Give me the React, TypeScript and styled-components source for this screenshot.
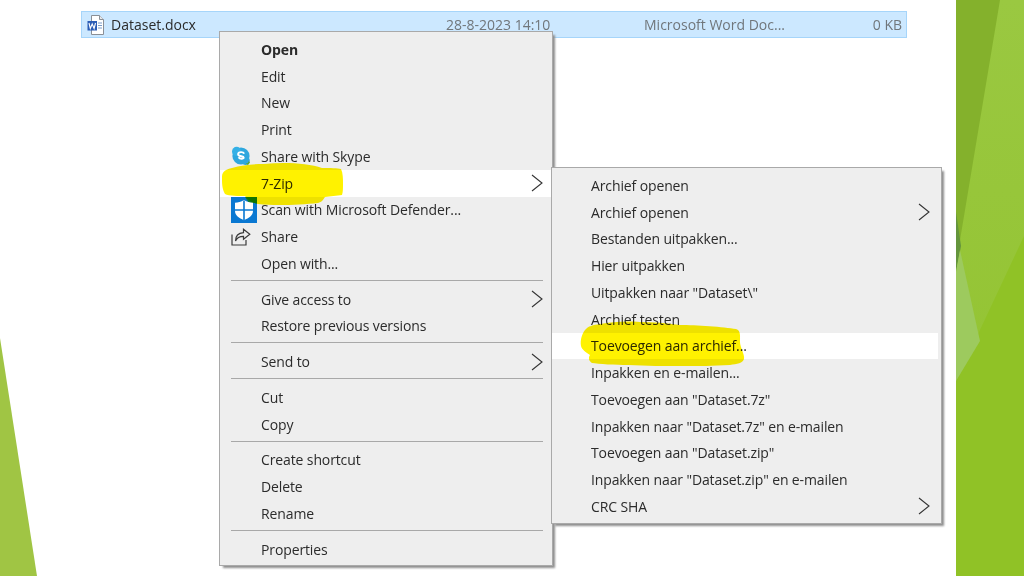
import React from "react";
import styled, { createGlobalStyle } from "styled-components";

const GlobalStyle = createGlobalStyle`
	html, body {
		margin: 0;
		padding: 0;
		background: #fff;
	}
	body {
		font-family: "Open Sans", "Noto Sans", sans-serif;
	}
`;

type Entry =
	| { kind: "sep" }
	| { kind: "item"; label: string; bold?: boolean; sub?: boolean; active?: boolean; icon?: React.ReactNode };

const SkypeIcon = () => (
	<svg width="20" height="20" viewBox="0 0 20 20">
		<circle cx="10" cy="10" r="8.6" fill="#2ea7de" />
		<circle cx="5.6" cy="5.4" r="4.6" fill="#35b0e6" />
		<circle cx="14.6" cy="14.8" r="4.2" fill="#2ea7de" />
		<path d="M14.8 17.6a3 3 0 0 0 3-2.600l1.200 1.400-2 2.600z" fill="#58a53a" />
		<path
			d="M13.200 7.600c-.5-1-1.700-1.500-3.100-1.500-1.700 0-3 .8-3 2.100 0 2.700 5.600 1.500 5.600 3.400 0 .7-.8 1.100-2.200 1.100-1.300 0-2.300-.5-3-1.500"
			fill="none"
			stroke="#fff"
			strokeWidth="1.900"
		/>
	</svg>
);

const DefenderIcon = () => (
	<svg width="26" height="26" viewBox="0 0 26 26">
		<rect width="26" height="26" fill="#0a78d2" />
		<path d="M14 0h12v6H18z" fill="#117a2e" />
		<path d="M13 3c3 2 6 2.600 9 2.800v8c0 4.600-4 7.400-9 9.400-5-2-9-4.800-9-9.400v-8c3-.2 6-.8 9-2.800z" fill="#fff" />
		<path d="M12.200 3.500h1.600v20h-1.600zM4 12.200h18v1.600H4z" fill="#0a78d2" />
	</svg>
);

const ShareIcon = () => (
	<svg width="20" height="18" viewBox="0 0 20 18" fill="none" stroke="#3a3a3a" strokeWidth="1.200">
		<path d="M1 6.500v10.500h14v-5" />
		<path d="M12.500 1.200l6.300 5-6.300 5V8.300c-4 0-6.600 1.300-8 4.700 0-5 3-8 8-8.400z" />
	</svg>
);

const WordIcon = () => (
	<svg width="18" height="20" viewBox="0 0 18 20">
		<path d="M4.500 .5h8l4 4v15h-12z" fill="#fff" stroke="#8a8f96" />
		<path d="M12.500 .5v4h4" fill="#e8eaec" stroke="#8a8f96" />
		<path d="M11 8h4M11 10.500h4M11 13h4" stroke="#7b9cc8" strokeWidth="1" />
		<rect x=".5" y="6" width="9.500" height="9.500" fill="#2b5cb5" />
		<path d="M2 8l1.300 5.500L5.200 9l1.900 4.500L8.500 8" fill="none" stroke="#fff" strokeWidth="1.100" />
	</svg>
);

const SubArrow = () => (
	<svg width="12" height="18" viewBox="0 0 12 18" fill="none" stroke="#333" strokeWidth="1.100">
		<path d="M1 1l10 8-10 8" />
	</svg>
);

const mainEntries: Entry[] = [
	{ kind: "item", label: "Open", bold: true },
	{ kind: "item", label: "Edit" },
	{ kind: "item", label: "New" },
	{ kind: "item", label: "Print" },
	{ kind: "item", label: "Share with Skype", icon: <SkypeIcon /> },
	{ kind: "item", label: "7-Zip", sub: true, active: true },
	{ kind: "item", label: "Scan with Microsoft Defender...", icon: <DefenderIcon /> },
	{ kind: "item", label: "Share", icon: <ShareIcon /> },
	{ kind: "item", label: "Open with..." },
	{ kind: "sep" },
	{ kind: "item", label: "Give access to", sub: true },
	{ kind: "item", label: "Restore previous versions" },
	{ kind: "sep" },
	{ kind: "item", label: "Send to", sub: true },
	{ kind: "sep" },
	{ kind: "item", label: "Cut" },
	{ kind: "item", label: "Copy" },
	{ kind: "sep" },
	{ kind: "item", label: "Create shortcut" },
	{ kind: "item", label: "Delete" },
	{ kind: "item", label: "Rename" },
	{ kind: "sep" },
	{ kind: "item", label: "Properties" },
];

const zipEntries: Entry[] = [
	{ kind: "item", label: "Archief openen" },
	{ kind: "item", label: "Archief openen", sub: true },
	{ kind: "item", label: "Bestanden uitpakken..." },
	{ kind: "item", label: "Hier uitpakken" },
	{ kind: "item", label: 'Uitpakken naar "Dataset\\"' },
	{ kind: "item", label: "Archief testen" },
	{ kind: "item", label: "Toevoegen aan archief...", active: true },
	{ kind: "item", label: "Inpakken en e-mailen..." },
	{ kind: "item", label: 'Toevoegen aan "Dataset.7z"' },
	{ kind: "item", label: 'Inpakken naar "Dataset.7z" en e-mailen' },
	{ kind: "item", label: 'Toevoegen aan "Dataset.zip"' },
	{ kind: "item", label: 'Inpakken naar "Dataset.zip" en e-mailen' },
	{ kind: "item", label: "CRC SHA", sub: true },
];

function MenuEntries({ entries }: { entries: Entry[] }) {
	return (
		<>
			{entries.map((entry, i) =>
				entry.kind === "sep" ? (
					<Separator key={i} />
				) : (
					<Row key={i} $active={entry.active}>
						{entry.icon && <IconSlot>{entry.icon}</IconSlot>}
						<RowLabel $bold={entry.bold}>{entry.label}</RowLabel>
						{entry.sub && (
							<Arrow>
								<SubArrow />
							</Arrow>
						)}
					</Row>
				)
			)}
		</>
	);
}

export default function App() {
	return (
		<Page>
			<GlobalStyle />
			<Slide>
				<FileRow>
					<FileName>
						<WordIcon />
						Dataset.docx
					</FileName>
					<FileMeta>28-8-2023 14:10</FileMeta>
					<FileMeta>Microsoft Word Doc...</FileMeta>
					<FileSize>0 KB</FileSize>
				</FileRow>
				<MainMenu>
					<MenuEntries entries={mainEntries} />
				</MainMenu>
				<ZipMenu>
					<MenuEntries entries={zipEntries} />
				</ZipMenu>
				<Marker viewBox="0 0 1024 576">
					<path
						d="M232 168c10-3 20-4 32-4 20-2 44-1 58 4 8 0 16 0 19 1 2 4 2 10 2 15 0 4 0 8-1 11-5 1-12 1-17 2-2 3-3 5-7 6-18 2-44 3-60 1-6-1-10-4-13-8-6 0-16 0-20-2-3-5-3-11-3-16 0-5 1-8 10-10z"
						fill="#fff200"
					/>
					<path
						d="M585 330c3-4 8-5 15-6 12-2 24-3 40-2 14 0 26 1 40 3 16 0 44 2 56 4 5 1 4 8 4 13 0 5 5 13 4 17-1 4-7 5-14 6-16 1-32 1-50 1-14 0-34 0-52-1-12 0-30-1-36-2-3-2-4-5-2-8-4-3-8-5-9-9-1-6 1-12 4-16z"
						fill="#fff200"
					/>
				</Marker>
				<LeftShard viewBox="0 0 37 238" preserveAspectRatio="none">
					<path d="M0 0L37 238H0z" fill="#a0c544" />
				</LeftShard>
			</Slide>
			<Side>
				<SideArt viewBox="0 0 68 576" preserveAspectRatio="none">
					<defs>
						<linearGradient id="upperBand" x1="0" y1="0" x2="0" y2="1">
							<stop offset="0" stopColor="#9ac841" />
							<stop offset="1" stopColor="#94c433" />
						</linearGradient>
					</defs>
					<rect width="68" height="576" fill="#90c226" />
					<path d="M0 0h68v236L0 381z" fill="url(#upperBand)" />
					<path d="M0 0h44L4 240 0 270z" fill="#84b12c" />
					<path d="M0 212l5 34-5 26z" fill="#64953c" />
					<path d="M4 250L24 341 0 381V272z" fill="#9dca5e" />
				</SideArt>
			</Side>
		</Page>
	);
}

const Page = styled.div`
	display: flex;
	width: 1024px;
	height: 576px;
	overflow: hidden;
	background: #fff;
`;

const Slide = styled.div`
	position: relative;
	flex: 1;
	padding: 11px 49px 0 81px;
`;

const Side = styled.div`
	flex: 0 0 68px;
`;

const SideArt = styled.svg`
	display: block;
	width: 68px;
	height: 576px;
`;

const LeftShard = styled.svg`
	position: absolute;
	left: 0;
	top: 338px;
	width: 37px;
	height: 238px;
`;

const Marker = styled.svg`
	position: absolute;
	left: 0;
	top: 0;
	width: 1024px;
	height: 576px;
	mix-blend-mode: multiply;
	pointer-events: none;
`;

const FileRow = styled.div`
	display: grid;
	grid-template-columns: 359px 198px 1fr auto;
	align-items: center;
	box-sizing: border-box;
	height: 27px;
	padding: 0 4px 0 5px;
	background: #cce8ff;
	border: 1px solid #a6d5fa;
	font-size: 14px;
`;

const FileName = styled.div`
	display: flex;
	align-items: center;
	gap: 6px;
	color: #2b2b2b;
`;

const FileMeta = styled.div`
	color: #70767b;
`;

const FileSize = styled(FileMeta)`
	text-align: right;
`;

const Menu = styled.div`
	position: absolute;
	box-sizing: border-box;
	display: flex;
	flex-direction: column;
	background: #eeeeee;
	border: 1px solid #a9a9a9;
	box-shadow: 3px 3px 2px -1px #8e8e8e;
	font-size: 14px;
	letter-spacing: -0.12px;
	color: #2b2b2b;
`;

const MainMenu = styled(Menu)`
	left: 219px;
	top: 31px;
	width: 334px;
	height: 535px;
	padding: 4px 0;
`;

const ZipMenu = styled(Menu)`
	left: 551px;
	top: 167px;
	width: 391px;
	height: 357px;
	padding: 4px 3px 5px 0;
`;

const Row = styled.div<{ $active?: boolean }>`
	position: relative;
	flex: 0 0 26.75px;
	display: flex;
	align-items: center;
	padding-left: 41px;
	background: ${(p) => (p.$active ? "#ffffff" : "transparent")};

	${ZipMenu} & {
		padding-left: 39px;
	}
`;

const RowLabel = styled.span<{ $bold?: boolean }>`
	font-weight: ${(p) => (p.$bold ? 700 : 400)};
	white-space: nowrap;
`;

const IconSlot = styled.span`
	position: absolute;
	left: 11px;
	top: 50%;
	transform: translateY(-50%);
	display: flex;
`;

const Arrow = styled.span`
	position: absolute;
	right: 9px;
	top: 50%;
	transform: translateY(-50%);
	display: flex;

	${ZipMenu} & {
		right: 8px;
	}
`;

const Separator = styled.div`
	flex: 0 0 9px;
	display: flex;
	align-items: flex-start;
	box-sizing: border-box;
	padding-top: 3px;
	margin: 0 9px 0 11px;

	&::before {
		content: "";
		flex: 1;
		height: 1px;
		background: #a8a8a8;
	}
`;
